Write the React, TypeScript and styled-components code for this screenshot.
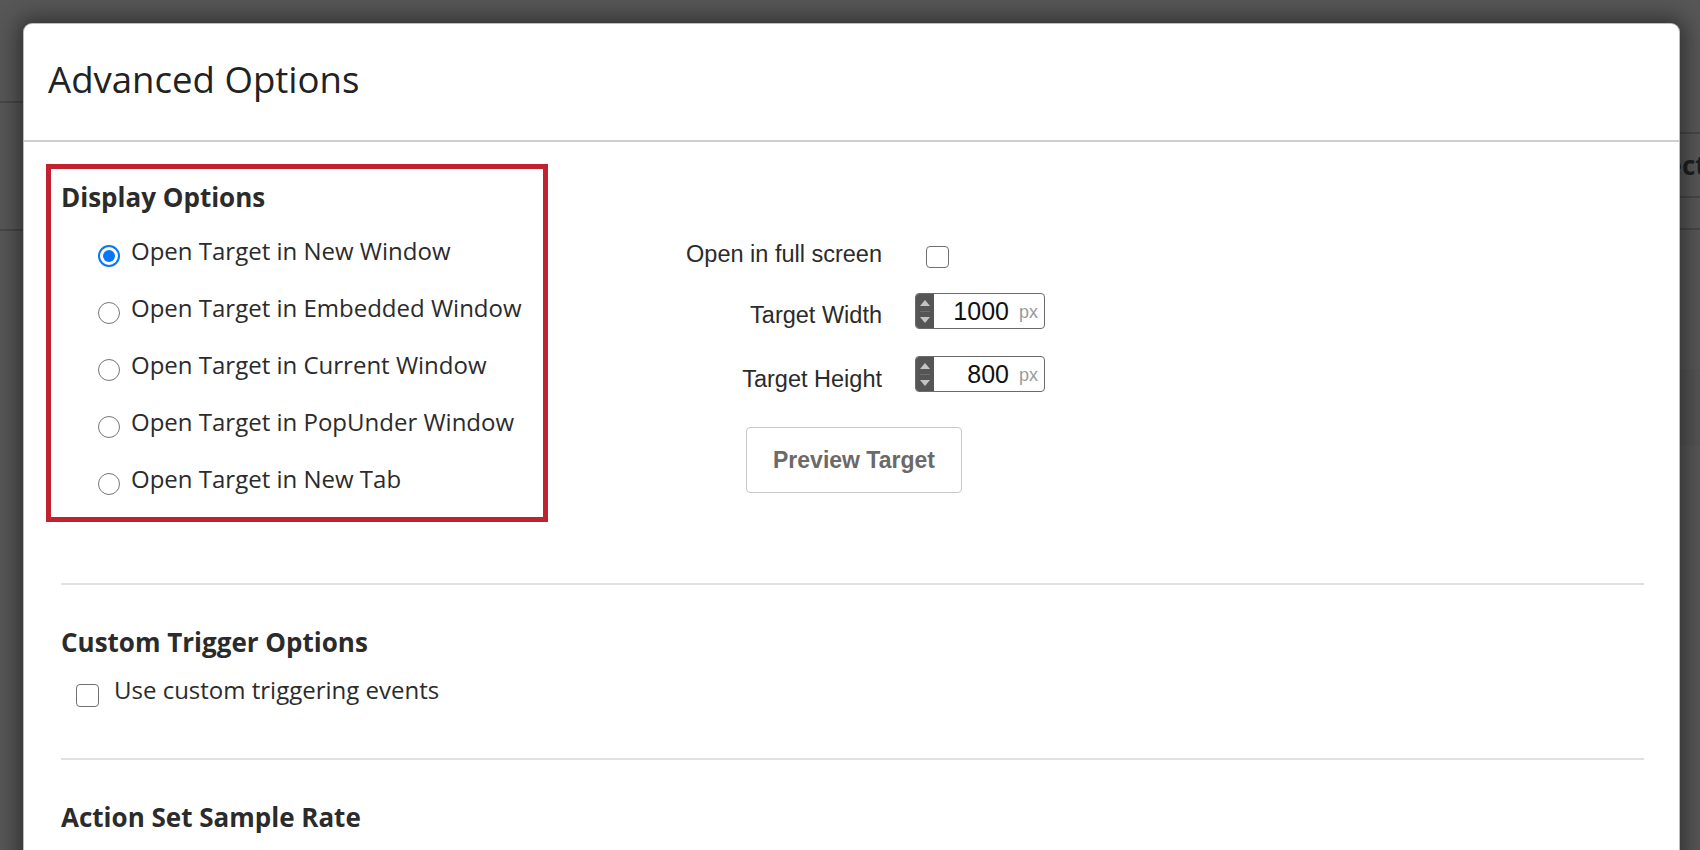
import React from "react";
import styled, { createGlobalStyle } from "styled-components";

const Global = createGlobalStyle`
  html, body { margin: 0; padding: 0; width: 1700px; height: 850px; overflow: hidden; background: #575757; }
  #root { width: 1700px; height: 850px; }
  * { box-sizing: border-box; }
`;

const Page = styled.div`
  position: relative;
  width: 1700px;
  height: 850px;
  background: #575757;
  display: grid;
  grid-template-columns: 850px 1fr;
  overflow: hidden;
`;

const BgColumn = styled.div`
  display: flex;
  flex-direction: column;
`;

const BgRow = styled.div<{ $h: number; $line?: boolean; $shade?: string }>`
  flex: none;
  height: ${(p) => p.$h}px;
  border-bottom: ${(p) => (p.$line ? "2px solid #474747" : "none")};
  background: ${(p) => p.$shade ?? "transparent"};
  display: flex;
  align-items: center;
`;

const BgText = styled.span`
  font-family: "Open Sans", sans-serif;
  font-weight: 700;
  font-size: 26px;
  color: #1f1f1f;
  margin-left: 779px;
  white-space: nowrap;
`;

const Overlay = styled.div`
  position: absolute;
  inset: 0;
  padding: 24px 21px 0 24px;
`;

const Modal = styled.div`
  width: 1655px;
  height: 900px;
  background: #fff;
  border-radius: 8px 8px 0 0;
  box-shadow: 0 0 0 1px #bdbdbd, 0 0 22px 6px rgba(0, 0, 0, 0.45);
  display: flex;
  flex-direction: column;
`;

const Header = styled.div`
  height: 118px;
  flex: none;
  padding: 31px 0 0 24px;
  border-bottom: 2px solid #cfcfcf;
`;

const Title = styled.h1`
  margin: 0;
  font-family: "Open Sans", sans-serif;
  font-weight: 400;
  font-size: 36.6px;
  line-height: 48px;
  color: #222;
`;

const Body = styled.div`
  padding: 22px 35px 0 37px;
  display: flex;
  flex-direction: column;
`;

const DisplaySection = styled.div`
  display: flex;
  align-items: flex-start;
  margin-left: -15px;
`;

const HighlightBox = styled.div`
  width: 502px;
  border: 5px solid #c1222f;
  padding: 12px 10px 10px 10px;
`;

const SectionTitle = styled.h2<{ $mt?: number }>`
  margin: ${(p) => p.$mt ?? 0}px 0 0 0;
  font-family: "Open Sans", sans-serif;
  font-weight: 700;
  font-size: 26px;
  line-height: 32px;
  color: #2b2b2b;
`;

const RadioList = styled.div`
  margin-top: 9px;
  padding-left: 37px;
  display: flex;
  flex-direction: column;
`;

const RadioRow = styled.label`
  height: 57px;
  display: flex;
  align-items: center;
  gap: 11px;
`;

const Radio = styled.span<{ $checked?: boolean }>`
  flex: none;
  width: 22px;
  height: 22px;
  margin-top: 11px;
  border-radius: 50%;
  background: #fff;
  border: ${(p) => (p.$checked ? "2.5px solid #0b76f5" : "1.5px solid #767676")};
  display: flex;
  align-items: center;
  justify-content: center;
  &::after {
    content: "";
    display: ${(p) => (p.$checked ? "block" : "none")};
    width: 12px;
    height: 12px;
    border-radius: 50%;
    background: #0b76f5;
  }
`;

const OptionText = styled.span`
  font-family: "Open Sans", sans-serif;
  font-size: 24px;
  line-height: 32px;
  color: #2b2b2b;
  white-space: nowrap;
`;

const RightColumn = styled.div`
  margin-left: 137px;
  margin-top: 78px;
  display: flex;
  flex-direction: column;
`;

const FieldRow = styled.div<{ $h: number; $mt?: number }>`
  height: ${(p) => p.$h}px;
  margin-top: ${(p) => p.$mt ?? 0}px;
  display: flex;
  align-items: center;
`;

const FieldLabel = styled.span<{ $shift: number }>`
  width: 197px;
  margin-right: 33px;
  text-align: right;
  font-family: "Liberation Sans", Arial, sans-serif;
  font-size: 23.5px;
  line-height: 28px;
  color: #2b2b2b;
  white-space: nowrap;
  position: relative;
  top: ${(p) => p.$shift}px;
`;

const Checkbox = styled.span<{ $ml?: number; $mt?: number; $h?: number }>`
  flex: none;
  width: 23px;
  height: ${(p) => p.$h ?? 23}px;
  margin-left: ${(p) => p.$ml ?? 0}px;
  margin-top: ${(p) => p.$mt ?? 0}px;
  border: 1.5px solid #707070;
  border-radius: 4px;
  background: #fff;
`;

const NumberBox = styled.div`
  width: 130px;
  height: 36px;
  display: flex;
  border: 1.5px solid #6b6b6b;
  border-radius: 4px;
  overflow: hidden;
  background: #fff;
`;

const Spinner = styled.div`
  width: 18px;
  flex: none;
  background: #555;
  display: flex;
  flex-direction: column;
  align-items: center;
  justify-content: space-between;
  padding: 6px 0 5px;
`;

const SpinArrow = styled.span<{ $down?: boolean }>`
  width: 0;
  height: 0;
  border-left: 5px solid transparent;
  border-right: 5px solid transparent;
  ${(p) => (p.$down ? "border-top: 6px solid #c4c4c4;" : "border-bottom: 6px solid #c4c4c4;")}
`;

const SpinDivider = styled.span`
  width: 10px;
  height: 1px;
  background: #6e6e6e;
`;

const ValueArea = styled.div`
  flex: 1;
  display: flex;
  align-items: center;
  justify-content: flex-end;
  padding-right: 6px;
`;

const Value = styled.span`
  font-family: "Liberation Sans", Arial, sans-serif;
  font-size: 25px;
  color: #111;
`;

const Unit = styled.span`
  font-family: "Liberation Sans", Arial, sans-serif;
  font-size: 18px;
  color: #9a9a9a;
  margin-left: 10px;
  position: relative;
  top: 1px;
`;

const ButtonRow = styled.div`
  margin-top: 35px;
  padding-left: 61px;
`;

const PreviewButton = styled.button`
  width: 216px;
  height: 66px;
  background: #fff;
  border: 1.5px solid #c8c8c8;
  border-radius: 4px;
  font-family: "Liberation Sans", Arial, sans-serif;
  font-weight: 700;
  font-size: 23px;
  color: #6a6a6a;
  cursor: pointer;
`;

const Divider = styled.div<{ $mt: number }>`
  height: 2px;
  margin-top: ${(p) => p.$mt}px;
  background: #e0e0e0;
`;

const CheckRow = styled.label`
  margin-top: 16px;
  height: 32px;
  padding-left: 15px;
  display: flex;
  align-items: center;
  gap: 15px;
`;

function NumberField({ value }: { value: string }) {
  return (
    <NumberBox>
      <Spinner>
        <SpinArrow />
        <SpinDivider />
        <SpinArrow $down />
      </Spinner>
      <ValueArea>
        <Value>{value}</Value>
        <Unit>px</Unit>
      </ValueArea>
    </NumberBox>
  );
}

const options = [
  "Open Target in New Window",
  "Open Target in Embedded Window",
  "Open Target in Current Window",
  "Open Target in PopUnder Window",
  "Open Target in New Tab",
];

export default function App() {
  return (
    <>
      <Global />
      <Page>
        <BgColumn>
          <BgRow $h={103} $line />
          <BgRow $h={128} $line />
        </BgColumn>
        <BgColumn>
          <BgRow $h={134} $line />
          <BgRow $h={64} $line>
            <BgText>Select</BgText>
          </BgRow>
          <BgRow $h={32} $line />
          <BgRow $h={139} />
          <BgRow $h={76} $shade="#545454" />
        </BgColumn>
        <Overlay>
          <Modal>
            <Header>
              <Title>Advanced Options</Title>
            </Header>
            <Body>
              <DisplaySection>
                <HighlightBox>
                  <SectionTitle>Display Options</SectionTitle>
                  <RadioList>
                    {options.map((o, i) => (
                      <RadioRow key={o}>
                        <Radio $checked={i === 0} />
                        <OptionText>{o}</OptionText>
                      </RadioRow>
                    ))}
                  </RadioList>
                </HighlightBox>
                <RightColumn>
                  <FieldRow $h={30}>
                    <FieldLabel $shift={-3}>Open in full screen</FieldLabel>
                    <Checkbox $ml={11} $h={22} />
                  </FieldRow>
                  <FieldRow $h={36} $mt={21}>
                    <FieldLabel $shift={4}>Target Width</FieldLabel>
                    <NumberField value="1000" />
                  </FieldRow>
                  <FieldRow $h={36} $mt={27}>
                    <FieldLabel $shift={5}>Target Height</FieldLabel>
                    <NumberField value="800" />
                  </FieldRow>
                  <ButtonRow>
                    <PreviewButton>Preview Target</PreviewButton>
                  </ButtonRow>
                </RightColumn>
              </DisplaySection>
              <Divider $mt={61} />
              <SectionTitle $mt={41}>Custom Trigger Options</SectionTitle>
              <CheckRow>
                <Checkbox $mt={10} />
                <OptionText>Use custom triggering events</OptionText>
              </CheckRow>
              <Divider $mt={52} />
              <SectionTitle $mt={41}>Action Set Sample Rate</SectionTitle>
            </Body>
          </Modal>
        </Overlay>
      </Page>
    </>
  );
}
